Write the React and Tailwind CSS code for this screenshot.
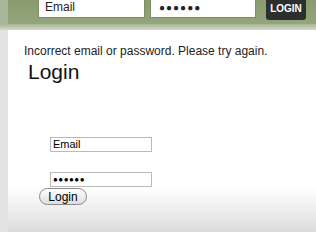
export default function App() {
  return (
    <div className="w-[316px] h-[232px] overflow-hidden bg-white flex flex-col" style={{ fontFamily: '"Liberation Sans", Arial, sans-serif' }}>
      <div className="h-[24px] shrink-0 bg-gradient-to-b from-[#8a9c6e] to-[#93a57a] flex items-end pb-[6px] overflow-hidden">
        <div className="w-[8px] self-stretch -mb-[6px] bg-[#a9b69a]" />
        <div className="ml-[30px] w-[107px] h-[22px] bg-white border border-[#7d8d66] flex items-center pl-[6px] text-[12px] text-[#222]">Email</div>
        <div className="ml-[5px] w-[106px] h-[22px] bg-white border border-[#7d8d66] flex items-center pl-[8px] text-[10px] tracking-[1px] text-[#222]">●●●●●●</div>
        <div className="ml-[10px] w-[40px] h-[24px] -mb-[2px] bg-[#2b2f2d] rounded-[3px] flex items-end justify-center pb-[4px] text-[10px] font-bold text-white">LOGIN</div>
      </div>
      <div className="h-[6px] shrink-0 bg-gradient-to-b from-[#a7b494] to-[#d3d9cc]" />
      <div className="flex-1 flex">
        <div className="w-[8px] bg-[#e1e4e1]" />
        <div className="flex-1 bg-gradient-to-b from-white via-white via-[78%] to-[#dcdcdc]">
          <div className="pl-[16px] pt-[14px] text-[12px] leading-[14px] text-[#222]">Incorrect email or password. Please try again.</div>
          <div className="pl-[20px] mt-[2px] text-[21px] leading-[24px] text-[#111]">Login</div>
          <div className="pl-[31px] mt-[53px] flex flex-col items-start">
            <div className="ml-[11px] w-[102px] h-[15px] border border-[#b9b9b9] flex items-center pl-[2px] text-[11px] text-black">Email</div>
            <div className="ml-[11px] mt-[20px] w-[102px] h-[15px] border border-[#b9b9b9] flex items-center pl-[2px] text-[8px] tracking-[0.5px] text-black">●●●●●●</div>
            <div className="mt-[1px] w-[48px] h-[17px] rounded-full border border-[#8a8a8a] bg-gradient-to-b from-white to-[#dedede] flex items-center justify-center text-[12px] text-black">Login</div>
          </div>
        </div>
      </div>
    </div>
  );
}
